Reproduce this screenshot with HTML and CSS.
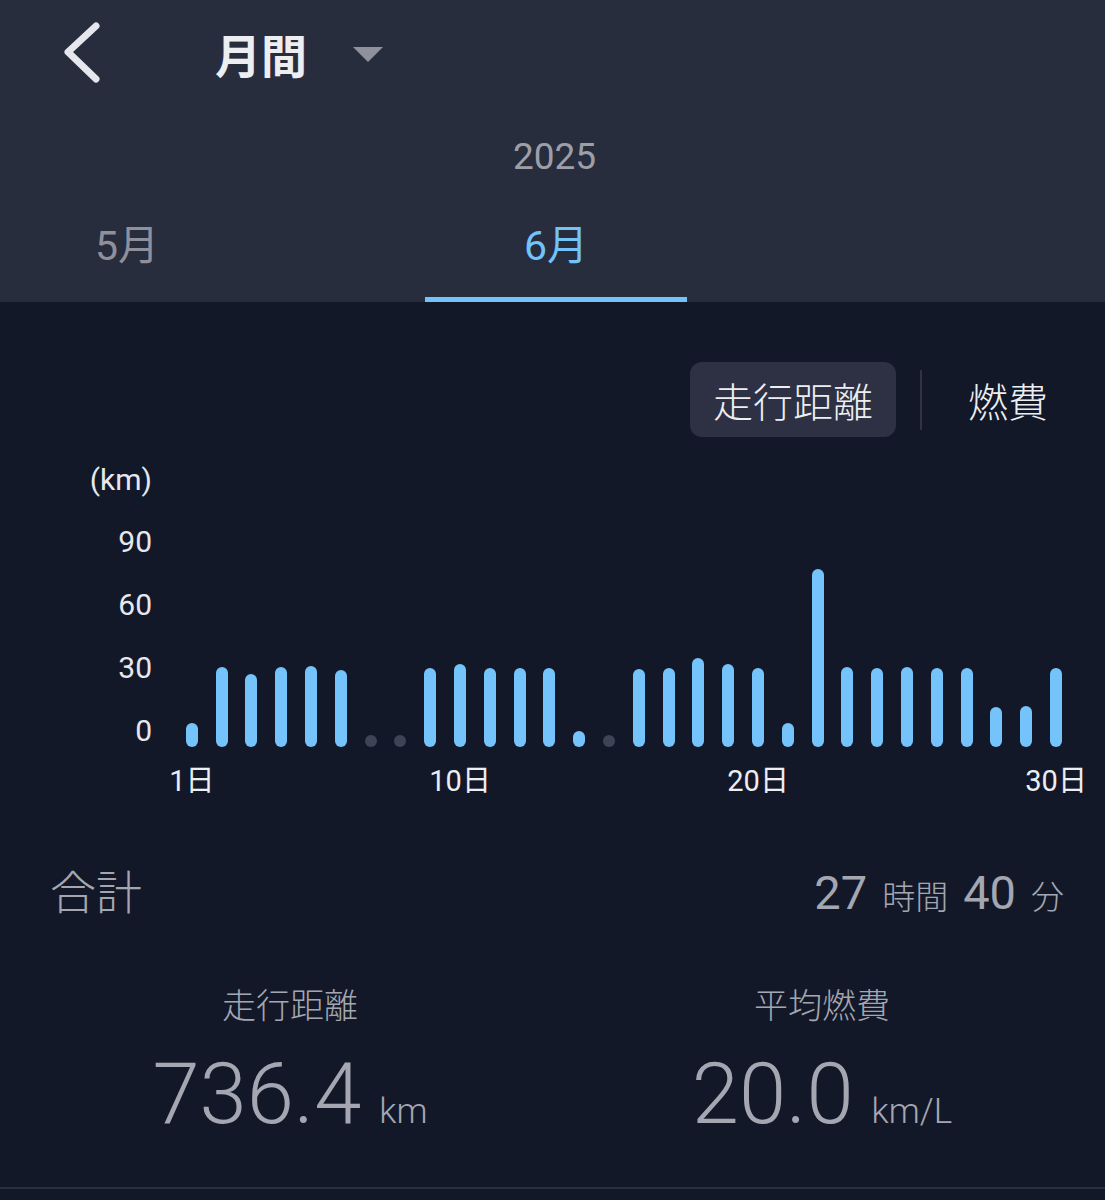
FILE: index.html
```html
<!DOCTYPE html>
<html lang="ja">
<head>
  <meta charset="UTF-8">
  <meta name="viewport" content="width=device-width, initial-scale=1.0">
  <title>月間レポート</title>
  <link rel="stylesheet" href="styles.css">
</head>
<body>
  <!-- ヘッダー -->
  <div class="header">
    <div class="topbar">
      <svg class="back" width="44" height="64" viewBox="0 0 44 64">
        <polyline points="33,4 5,30 33,57" fill="none" stroke="#e6e7ec" stroke-width="7" stroke-linecap="round" stroke-linejoin="round"/>
      </svg>
      <span class="title">月間</span>
      <svg class="caret" width="30" height="15" viewBox="0 0 30 15">
        <polygon points="0,0 30,0 15,15" fill="#8e919b"/>
      </svg>
    </div>
    <div class="year">2025</div>
    <div class="tabs">
      <div class="tab first">5月</div>
      <div class="tab active">6月</div>
    </div>
  </div>

  <!-- グラフ切り替え -->
  <div class="toggle">
    <button class="toggle-btn selected">走行距離</button>
    <span class="toggle-sep"></span>
    <button class="toggle-btn">燃費</button>
  </div>

  <!-- 日別グラフ -->
  <div class="chart">
    <div class="axis">
      <div class="unit">(km)</div>
      <div class="tick">90</div>
      <div class="tick">60</div>
      <div class="tick">30</div>
      <div class="tick">0</div>
    </div>
    <div class="plot">
      <div class="day"><div class="bar" style="height:24px"></div></div>
      <div class="day"><div class="bar" style="height:80px"></div></div>
      <div class="day"><div class="bar" style="height:73px"></div></div>
      <div class="day"><div class="bar" style="height:80px"></div></div>
      <div class="day"><div class="bar" style="height:81px"></div></div>
      <div class="day"><div class="bar" style="height:77px"></div></div>
      <div class="day"><div class="dot"></div></div>
      <div class="day"><div class="dot"></div></div>
      <div class="day"><div class="bar" style="height:79px"></div></div>
      <div class="day"><div class="bar" style="height:83px"></div></div>
      <div class="day"><div class="bar" style="height:79px"></div></div>
      <div class="day"><div class="bar" style="height:79px"></div></div>
      <div class="day"><div class="bar" style="height:79px"></div></div>
      <div class="day"><div class="bar" style="height:16px"></div></div>
      <div class="day"><div class="dot"></div></div>
      <div class="day"><div class="bar" style="height:78px"></div></div>
      <div class="day"><div class="bar" style="height:79px"></div></div>
      <div class="day"><div class="bar" style="height:89px"></div></div>
      <div class="day"><div class="bar" style="height:83px"></div></div>
      <div class="day"><div class="bar" style="height:79px"></div></div>
      <div class="day"><div class="bar" style="height:24px"></div></div>
      <div class="day"><div class="bar" style="height:178px"></div></div>
      <div class="day"><div class="bar" style="height:80px"></div></div>
      <div class="day"><div class="bar" style="height:79px"></div></div>
      <div class="day"><div class="bar" style="height:80px"></div></div>
      <div class="day"><div class="bar" style="height:79px"></div></div>
      <div class="day"><div class="bar" style="height:79px"></div></div>
      <div class="day"><div class="bar" style="height:40px"></div></div>
      <div class="day"><div class="bar" style="height:41px"></div></div>
      <div class="day"><div class="bar" style="height:79px"></div></div>
    </div>
  </div>
  <div class="xlabels">
    <div class="xl" style="grid-column:1"><span>1日</span></div>
    <div class="xl" style="grid-column:10"><span>10日</span></div>
    <div class="xl" style="grid-column:20"><span>20日</span></div>
    <div class="xl" style="grid-column:30"><span>30日</span></div>
  </div>

  <!-- 合計 -->
  <div class="total">
    <span class="total-label">合計</span>
    <span class="total-time">27<small>時間</small>40<small>分</small></span>
  </div>

  <div class="stats">
    <div class="stat">
      <div class="stat-label">走行距離</div>
      <div class="stat-value">736.4<small>km</small></div>
    </div>
    <div class="stat">
      <div class="stat-label">平均燃費</div>
      <div class="stat-value">20.0<small>km/L</small></div>
    </div>
  </div>
</body>
</html>
```

FILE: styles.css
```css
body {
  margin: 0;
  padding: 0;
  background-color: #131829;
  font-family: Roboto, "Noto Sans CJK JP", sans-serif;
  color: #eceef2;
  width: 1105px;
  height: 1200px;
  overflow: hidden;
}
.header {
  background-color: #282d3e;
}
.topbar {
  height: 106px;
  display: flex;
  align-items: center;
  padding-left: 63px;
}
.back {
  margin-top: 1px;
}
.title {
  margin-left: 108px;
  font-size: 46px;
  font-weight: bold;
  color: #eceef2;
}
.caret {
  margin-left: 46px;
  margin-top: 2px;
}
.year {
  height: 102px;
  line-height: 102px;
  text-align: center;
  font-size: 37px;
  color: #9c9fa8;
  padding-left: 4px;
}
.tabs {
  display: flex;
  height: 94px;
}
.tab {
  box-sizing: border-box;
  height: 94px;
  line-height: 76px;
  text-align: center;
  font-size: 41px;
  color: #8e919b;
  border-bottom: 5px solid transparent;
}
.tab.first {
  width: 254px;
  margin-right: 171px;
}
.tab.active {
  width: 262px;
  color: #72c3fa;
  border-bottom-color: #72c3fa;
}
.toggle {
  display: flex;
  justify-content: flex-end;
  align-items: center;
  margin-top: 60px;
  padding-right: 34px;
}
.toggle-btn {
  height: 75px;
  padding: 0 23px;
  border: none;
  border-radius: 12px;
  background: none;
  font-family: "Noto Sans CJK JP", sans-serif;
  font-size: 40px;
  font-weight: 300;
  color: #eceef2;
}
.toggle-btn.selected {
  background-color: #2d3143;
}
.toggle-sep {
  width: 2px;
  height: 60px;
  margin: 0 23px 0 24px;
  background-color: #2f3345;
}
.chart {
  display: flex;
  margin-top: 13px;
  height: 312px;
}
.axis {
  width: 152px;
  text-align: right;
  font-size: 30px;
  color: #e6e8ee;
}
.unit {
  height: 60px;
  line-height: 60px;
}
.tick {
  height: 63px;
  line-height: 63px;
}
.plot {
  margin-left: 25px;
  width: 894px;
  display: grid;
  grid-template-columns: repeat(30, minmax(0, 1fr));
  align-items: end;
  padding-bottom: 15px;
}
.day {
  display: flex;
  justify-content: center;
}
.bar {
  width: 12px;
  border-radius: 6px;
  background-color: #74c4fb;
}
.dot {
  width: 12px;
  height: 12px;
  border-radius: 50%;
  background-color: #3f4356;
}
.xlabels {
  margin-left: 177px;
  width: 894px;
  display: grid;
  grid-template-columns: repeat(30, minmax(0, 1fr));
  height: 38px;
  line-height: 38px;
  font-size: 29px;
  color: #eceef2;
}
.xl {
  grid-row: 1;
  display: flex;
  justify-content: center;
  white-space: nowrap;
}
.total {
  display: flex;
  justify-content: space-between;
  align-items: baseline;
  margin-top: 59px;
  padding: 0 41px 0 50px;
  height: 60px;
  line-height: 60px;
  color: #a4a7b1;
}
.total-label {
  font-family: "Noto Sans CJK JP", sans-serif;
  font-size: 46px;
  font-weight: 300;
}
.total-time {
  font-size: 47px;
}
.total-time small {
  font-family: "Noto Sans CJK JP", sans-serif;
  font-size: 33px;
  font-weight: 300;
  margin: 0 15px;
}
.total-time small:last-child {
  margin-right: 0;
}
.stats {
  display: flex;
  margin-top: 60px;
  padding: 0 17px 0 24px;
  height: 208px;
  border-bottom: 2px solid #2a2f40;
}
.stat {
  flex: 1;
  text-align: center;
  color: #a4a7b1;
}
.stat-label {
  font-family: "Noto Sans CJK JP", sans-serif;
  font-size: 34px;
  font-weight: 300;
  height: 50px;
  line-height: 50px;
}
.stat-value {
  margin-top: 15px;
  font-size: 85px;
  font-weight: 300;
  line-height: 100px;
}
.stat-value small {
  font-size: 35px;
  margin-left: 18px;
}
```
